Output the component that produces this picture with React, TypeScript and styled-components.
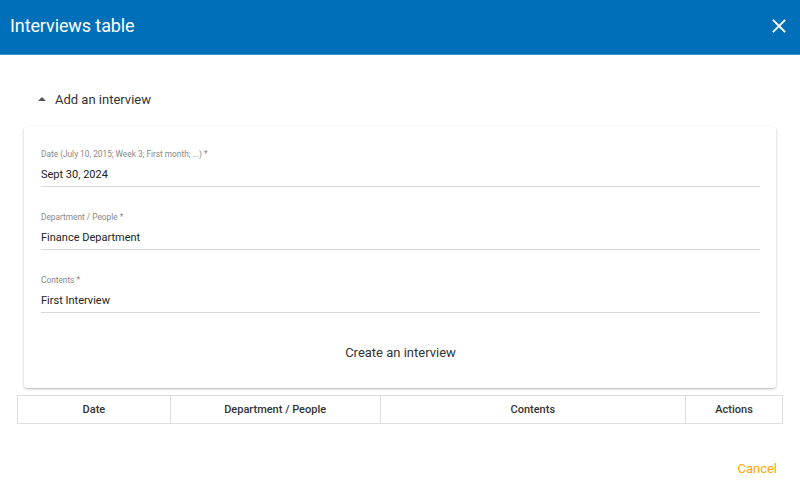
import React from "react";
import styled, { createGlobalStyle } from "styled-components";

const Global = createGlobalStyle`
  html, body { margin: 0; padding: 0; background: #fff; }
  body { font-family: Roboto, "Liberation Sans", Arial, sans-serif; }
  * { box-sizing: border-box; }
`;

const Dialog = styled.div`
  width: 800px;
  height: 486px;
  display: flex;
  flex-direction: column;
  background: #fff;
`;

const Header = styled.header`
  height: 55px;
  background: #006fba;
  display: flex;
  align-items: center;
  justify-content: space-between;
  padding: 0 12px 3px 10px;
  border-bottom: 1px solid #3a8fd0;
`;

const Title = styled.h1`
  margin: 0;
  color: #fff;
  font-size: 18px;
  font-weight: 400;
  letter-spacing: -0.1px;
`;

const CloseButton = styled.button`
  border: 0;
  background: none;
  padding: 0;
  width: 18px;
  height: 18px;
  display: flex;
  align-items: center;
  justify-content: center;
  cursor: pointer;
`;

const Body = styled.div`
  flex: 1;
  display: flex;
  flex-direction: column;
  padding: 0 17px;
`;

const Toggle = styled.div`
  display: flex;
  align-items: center;
  gap: 9px;
  height: 72px;
  padding: 16px 0 0 21px;
  font-size: 13px;
  color: #333;
`;

const Caret = styled.span`
  width: 0;
  height: 0;
  border-left: 4px solid transparent;
  border-right: 4px solid transparent;
  border-bottom: 4px solid #555;
  margin-top: -1px;
`;

const Card = styled.section`
  margin: 0 7px;
  background: #fff;
  border-radius: 3px;
  box-shadow: 0 1px 3px rgba(0, 0, 0, 0.22), 0 1px 1px rgba(0, 0, 0, 0.08);
  padding: 22px 16px 0 17px;
  height: 261px;
  display: flex;
  flex-direction: column;
`;

const Field = styled.div`
  display: flex;
  flex-direction: column;
  height: 63px;
`;

const Label = styled.label`
  font-size: 8.3px;
  color: #888;
  line-height: 10px;
`;

const Value = styled.div`
  margin-top: 9px;
  font-size: 11px;
  color: #222;
  line-height: 14px;
  padding-bottom: 4px;
  border-bottom: 1px solid #d9d9d9;
`;

const CreateButton = styled.button`
  border: 0;
  background: none;
  font-family: inherit;
  font-size: 13px;
  color: #333;
  margin-top: -1px;
  align-self: center;
  padding: 8px 12px;
  cursor: pointer;
`;

const Table = styled.table`
  margin-top: 7px;
  width: 766px;
  border-collapse: collapse;
  font-size: 11px;
`;

const Th = styled.th<{ $w: number }>`
  width: ${(p) => p.$w}px;
  height: 28px;
  border: 1px solid #dedede;
  font-weight: 500;
  color: #333;
  text-align: center;
  padding: 0;
`;

const Footer = styled.div`
  flex: 1;
  display: flex;
  justify-content: flex-end;
  align-items: flex-end;
  padding: 0 6px 10px 0;
`;

const Cancel = styled.button`
  border: 0;
  background: none;
  padding: 0;
  font-family: inherit;
  font-size: 13px;
  color: #ffa600;
  cursor: pointer;
`;

const fields = [
  { label: "Date (July 10, 2015; Week 3; First month; ...) *", value: "Sept 30, 2024" },
  { label: "Department / People *", value: "Finance Department" },
  { label: "Contents *", value: "First Interview" },
];

const columns = [
  { name: "Date", w: 153 },
  { name: "Department / People", w: 210 },
  { name: "Contents", w: 306 },
  { name: "Actions", w: 97 },
];

export default function App() {
  return (
    <>
      <Global />
      <Dialog>
        <Header>
          <Title>Interviews table</Title>
          <CloseButton aria-label="Close">
            <svg width="14" height="14" viewBox="0 0 14 14">
              <path d="M1.5 1.5L12.5 12.5M12.5 1.5L1.5 12.5" stroke="#fff" strokeWidth="1.8" strokeLinecap="square" />
            </svg>
          </CloseButton>
        </Header>
        <Body>
          <Toggle>
            <Caret />
            <span>Add an interview</span>
          </Toggle>
          <Card>
            {fields.map((f) => (
              <Field key={f.label}>
                <Label>{f.label}</Label>
                <Value>{f.value}</Value>
              </Field>
            ))}
            <CreateButton>Create an interview</CreateButton>
          </Card>
          <Table>
            <thead>
              <tr>
                {columns.map((c) => (
                  <Th key={c.name} $w={c.w}>
                    {c.name}
                  </Th>
                ))}
              </tr>
            </thead>
          </Table>
          <Footer>
            <Cancel>Cancel</Cancel>
          </Footer>
        </Body>
      </Dialog>
    </>
  );
}
